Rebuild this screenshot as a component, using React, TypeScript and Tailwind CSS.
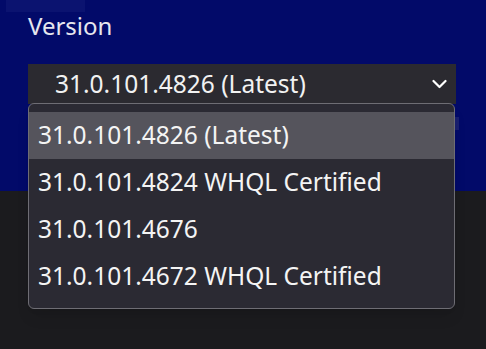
import React from 'react';

const versions = [
  '31.0.101.4826 (Latest)',
  '31.0.101.4824 WHQL Certified',
  '31.0.101.4676',
  '31.0.101.4672 WHQL Certified',
];

export default function App() {
  const selected = 0;

  return (
    <div className="relative w-[486px] h-[349px] overflow-hidden bg-[#1b1b1e] font-['Noto_Sans',sans-serif]">
      <div className="relative h-[191px] bg-[#020a69] px-[28px]">
        <div className="absolute left-[6px] top-0 w-[79px] h-[12px] bg-[#0b1370]" />
        <div className="pt-[10px] text-[24px] leading-[32px] text-[#e6e6ee]">Version</div>
        <div className="mt-[22px] relative">
          <button className="w-[428px] h-[40px] bg-[#2b2a30] flex items-center justify-between pl-[27px] pr-[8px] text-[24.5px] text-[#f2f2f2]">
            <span className="leading-none">{versions[selected]}</span>
            <svg width="15" height="10" viewBox="0 0 15 10" className="mr-[1px]">
              <path d="M1.5 2 L7.5 8 L13.5 2" fill="none" stroke="#ffffff" strokeWidth="2.2" strokeLinecap="round" strokeLinejoin="round" />
            </svg>
          </button>
          <div className="absolute left-[427px] top-[53px] w-[4px] h-[13px] bg-[#1a2070]" />
          <ul className="absolute left-0 top-[39px] w-[427px] bg-[#2b2a33] border border-[#6e6d74] rounded-[6px] py-[8px] z-10 shadow-lg">
            {versions.map((v, i) => (
              <li
                key={v}
                className={`h-[47px] flex items-center pl-[9px] text-[24.5px] text-[#f4f4f4] ${
                  i === selected ? 'bg-[#55545c]' : ''
                }`}
              >
                {v}
              </li>
            ))}
          </ul>
        </div>
      </div>
    </div>
  );
}
